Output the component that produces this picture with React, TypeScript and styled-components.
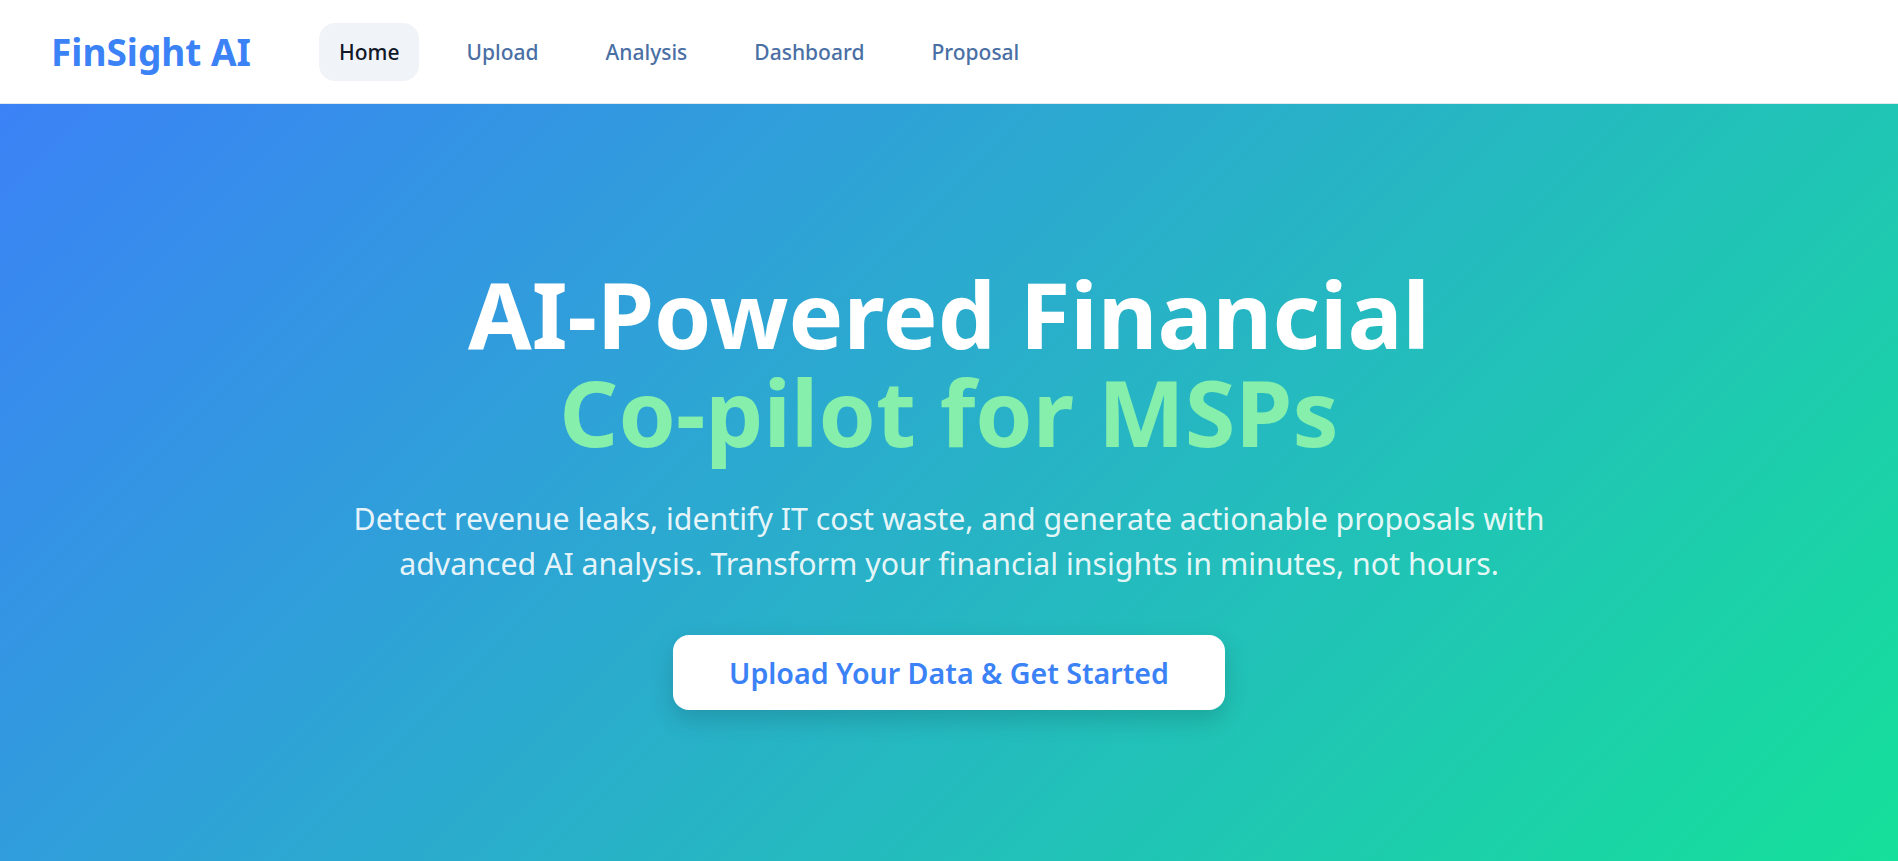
import React from "react";
import styled, { createGlobalStyle } from "styled-components";

const GlobalStyle = createGlobalStyle`
  * {
    box-sizing: border-box;
  }

  body {
    margin: 0;
    font-family: "Noto Sans", "Open Sans", sans-serif;
    background: #ffffff;
  }
`;

const Page = styled.div`
  display: flex;
  flex-direction: column;
  min-height: 100vh;
`;

const NavBar = styled.nav`
  display: flex;
  align-items: center;
  gap: 68px;
  height: 104px;
  padding: 0 51px;
  background: #ffffff;
  border-bottom: 1px solid #e2e8f0;
`;

const Logo = styled.div`
  font-size: 37px;
  font-weight: 700;
  color: #3b82f6;
  line-height: 1;
`;

const NavLinks = styled.ul`
  display: flex;
  align-items: center;
  gap: 27px;
  margin: 0;
  padding: 0;
  list-style: none;
`;

const NavLink = styled.li<{ $active?: boolean }>`
  padding: 13px 20px;
  border-radius: 16px;
  font-size: 21px;
  font-weight: 500;
  line-height: 32px;
  color: ${(p) => (p.$active ? "#111827" : "#4a6fa5")};
  background: ${(p) => (p.$active ? "#f0f3f8" : "transparent")};
  cursor: pointer;
`;

const Hero = styled.section`
  flex: 1;
  display: flex;
  flex-direction: column;
  align-items: center;
  padding-top: 161px;
  background: linear-gradient(135deg, #3b82f6 0%, #15e09a 100%);
  text-align: center;
`;

const Title = styled.h1`
  margin: 0 0 35px;
  font-size: 92px;
  font-weight: 700;
  line-height: 98px;
  color: #ffffff;
`;

const Accent = styled.span`
  display: block;
  color: #86efac;
`;

const Lead = styled.p`
  max-width: 1215px;
  margin: 0 0 49px;
  font-size: 30.3px;
  line-height: 45px;
  color: rgba(255, 255, 255, 0.9);
`;

const CtaButton = styled.button`
  height: 75px;
  padding: 0 56px;
  border: none;
  border-radius: 16px;
  background: #ffffff;
  color: #3b82f6;
  font-family: inherit;
  font-size: 28.6px;
  font-weight: 600;
  box-shadow: 0 10px 25px rgba(0, 0, 0, 0.15);
  cursor: pointer;
`;

const links = ["Home", "Upload", "Analysis", "Dashboard", "Proposal"];

export default function App() {
  return (
    <Page>
      <GlobalStyle />
      <NavBar>
        <Logo>FinSight AI</Logo>
        <NavLinks>
          {links.map((l) => (
            <NavLink key={l} $active={l === "Home"}>
              {l}
            </NavLink>
          ))}
        </NavLinks>
      </NavBar>
      <Hero>
        <Title>
          AI-Powered Financial
          <Accent>Co-pilot for MSPs</Accent>
        </Title>
        <Lead>
          Detect revenue leaks, identify IT cost waste, and generate actionable
          proposals with advanced AI analysis. Transform your financial insights
          in minutes, not hours.
        </Lead>
        <CtaButton>Upload Your Data &amp; Get Started</CtaButton>
      </Hero>
    </Page>
  );
}
